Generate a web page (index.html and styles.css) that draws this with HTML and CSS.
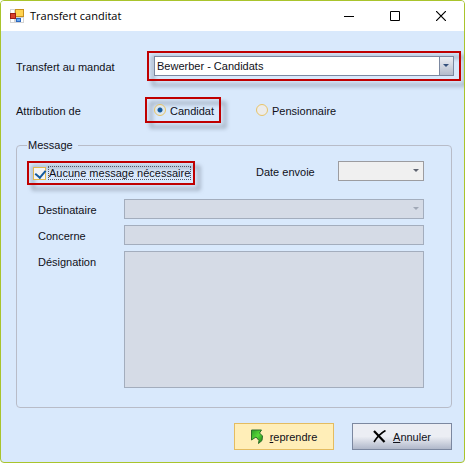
FILE: index.html
```
<!DOCTYPE html>
<html lang="fr">
<head>
    <meta charset="UTF-8">
    <title>Transfert canditat</title>
    <link rel="stylesheet" href="styles.css">
</head>
<body>
<div class="window">
    <div class="titlebar">
        <svg class="app-icon" width="14" height="14" viewBox="0 0 14 14">
            <rect x="0" y="0" width="14" height="14" fill="#d4d4d4"/>
            <path d="M1 1h3v3H1zM1 10h3v3H1zM11 9h2v4h-2z" fill="#fff"/>
            <rect x="5" y="0" width="9" height="8" fill="#c8901c"/>
            <rect x="6" y="1" width="7" height="6" fill="#ffd250"/>
            <rect x="0" y="4" width="6" height="6" fill="#9c1c14"/>
            <rect x="1" y="5" width="4" height="4" fill="#d8402c"/>
            <rect x="6" y="9" width="5" height="4" fill="#2c68c0"/>
            <rect x="7" y="10" width="3" height="2" fill="#68a8f0"/>
        </svg>
        <h1>Transfert canditat</h1>
        <button type="button" class="win-btn" aria-label="Réduire">
            <svg width="10" height="10" viewBox="0 0 10 10"><path d="M0 5.5h10" stroke="#000"/></svg>
        </button>
        <button type="button" class="win-btn" aria-label="Agrandir">
            <svg width="10" height="10" viewBox="0 0 10 10"><path d="M.5.5h9v9h-9z" fill="none" stroke="#000"/></svg>
        </button>
        <button type="button" class="win-btn" aria-label="Fermer">
            <svg width="10" height="10" viewBox="0 0 10 10"><path d="M0 0l10 10M10 0L0 10" stroke="#000" stroke-width="1.2"/></svg>
        </button>
    </div>
    <form class="content">
        <div class="row">
            <label class="row-label wide" for="mandat">Transfert au mandat</label>
            <div class="mark mark-mandat">
                <div class="combo combo-main">
                    <select id="mandat">
                        <option>Bewerber - Candidats</option>
                    </select>
                </div>
            </div>
        </div>
        <div class="row row-type" role="radiogroup" aria-labelledby="attribution">
            <span class="row-label" id="attribution">Attribution de</span>
            <div class="mark mark-type">
                <input type="radio" name="type" id="candidat" checked>
                <label for="candidat">Candidat</label>
            </div>
            <div class="choice">
                <input type="radio" name="type" id="pensionnaire">
                <label for="pensionnaire">Pensionnaire</label>
            </div>
        </div>
        <fieldset>
            <legend>Message</legend>
            <div class="options">
                <div class="mark mark-check">
                    <input type="checkbox" id="aucune" checked>
                    <label class="focused" for="aucune">Aucune message nécessaire</label>
                </div>
                <label class="date-label" for="date">Date envoie</label>
                <div class="combo combo-date">
                    <select id="date"><option></option></select>
                </div>
            </div>
            <div class="fields">
                <label for="destinataire">Destinataire</label>
                <div class="combo combo-off">
                    <select id="destinataire" disabled><option></option></select>
                </div>
                <label for="concerne">Concerne</label>
                <input type="text" id="concerne" disabled>
                <label for="designation">Désignation</label>
                <textarea id="designation" disabled></textarea>
            </div>
        </fieldset>
        <div class="buttons">
            <button type="button" class="btn btn-ok">
                <svg width="12" height="16" viewBox="0 0 12 16">
                    <defs>
                        <linearGradient id="green" x1="0" y1="0" x2="1" y2="1">
                            <stop offset="0" stop-color="#2c9c28"/>
                            <stop offset=".5" stop-color="#58d838"/>
                            <stop offset="1" stop-color="#187818"/>
                        </linearGradient>
                    </defs>
                    <path d="M.5 1L10.500 1 8.500 4 11.500 7 11 11.500 7.500 14.500 8 11.500 5 8 .5 11z" fill="url(#green)" stroke="#2c6c2c"/>
                </svg>
                <span><u>r</u>eprendre</span>
            </button>
            <button type="button" class="btn btn-cancel">
                <svg width="13" height="13" viewBox="0 0 13 13">
                    <path d="M1 1l10.500 11" stroke="#000" stroke-width="2.200"/>
                    <path d="M12.500.5C8 3 4 7 1 12" fill="none" stroke="#000" stroke-width="1.600"/>
                </svg>
                <span><u>A</u>nnuler</span>
            </button>
        </div>
    </form>
</div>
</body>
</html>
```
FILE: styles.css
```
*{
    box-sizing:border-box;
    margin:0;
    padding:0;
}
body{
    background:#fff;
    color:#101018;
    font:11px/14px "Liberation Sans",Arial,sans-serif;
}
input,select,textarea,button{
    font:inherit;
    color:inherit;
}
.window{
    min-height:100vh;
    border:1px solid #a9c42c;
    border-radius:4px;
    background:#d9e9fc;
    overflow:hidden;
}

/* title bar */
.titlebar{
    display:flex;
    align-items:center;
    height:30px;
    padding-left:9px;
    background:#fff;
}
.titlebar h1{
    flex:1;
    padding-left:6px;
    font:11px/16px "Open Sans",sans-serif;
    color:#000;
}
.win-btn{
    display:flex;
    align-items:center;
    justify-content:center;
    width:46px;
    height:28px;
    border:0;
    background:none;
}

.content{
    padding-top:20px;
}
.row{
    display:flex;
    align-items:center;
    margin-bottom:16px;
    padding:0 3px 0 15px;
}
.row-type{
    margin-bottom:15px;
}
.row-label{
    width:129px;
    padding-top:2px;
}
.row-label.wide{
    width:131px;
}

/* red frames with a shadow under the stroke */
.mark{
    position:relative;
    z-index:0;
    display:flex;
    align-items:center;
    border:2px solid #c00000;
}
.mark::before{
    content:"";
    position:absolute;
    z-index:-1;
    inset:-2px;
    border:2px solid #c00000;
    filter:drop-shadow(5px 5px 2px rgba(80,90,105,.6));
}
.mark-mandat{
    flex:1;
    height:30px;
    padding:0 5px;
}
.mark-type{
    width:76px;
    height:26px;
    padding-left:7px;
}
.mark-type label,
.choice label{
    padding-top:2px;
}
.mark-check{
    width:168px;
    height:24px;
    padding-left:4px;
}
.choice{
    display:flex;
    align-items:center;
    margin-left:35px;
}

/* combo boxes */
.combo{
    position:relative;
    height:20px;
}
.combo select{
    appearance:none;
    display:block;
    width:100%;
    height:100%;
    padding-left:2px;
    border:1px solid #7c88a0;
    border-radius:0;
    background:#fff;
    opacity:1;
}
.combo::after{
    content:"";
    position:absolute;
    top:8px;
    right:5px;
    border:3px solid transparent;
    border-top-color:#5f6470;
    border-bottom:0;
    pointer-events:none;
}
.combo-main{
    flex:1;
}
.combo-main::before{
    content:"";
    position:absolute;
    top:1px;
    right:1px;
    bottom:1px;
    width:13px;
    border-left:1px solid #7c88a0;
    background:linear-gradient(#eceef4,#b4bccc);
    pointer-events:none;
}
.combo-main::after{
    border-top-color:#34507c;
}
.combo-date{
    width:86px;
}
.combo-date select{
    border-color:#9c9ca0;
    background:#f0f0f0;
}
.combo-off::after{
    border-top-color:#a0a8b6;
}
.combo-off select,
.fields input,
.fields textarea{
    width:100%;
    border:1px solid #a3adbd;
    background:#d5dbe6;
}

/* radio and tick box */
input[type="radio"]{
    appearance:none;
    width:12px;
    height:12px;
    margin-right:4px;
    border:1px solid #e8c468;
    border-radius:50%;
    background:#ececec;
}
input[type="radio"]:checked{
    background:radial-gradient(circle,#145a9c 2px,#dce8f2 3px);
}
input[type="checkbox"]{
    appearance:none;
    flex:none;
    width:13px;
    height:13px;
    margin-right:2px;
    border:1px solid #e0b850;
    background:#f4f4f4;
}
input[type="checkbox"]:checked::before{
    content:"";
    display:block;
    width:5px;
    height:8px;
    margin:0 0 0 3px;
    border:solid #145a9c;
    border-width:0 2px 2px 0;
    transform:rotate(40deg);
}
.focused{
    padding:0 1px;
    outline:1px dotted #505868;
    outline-offset:-1px;
    white-space:nowrap;
}

fieldset{
    margin:0 12px 0 15px;
    padding:9px 27px 19px 10px;
    border:1px solid #b8bcc8;
    border-radius:4px;
}
legend{
    padding:0 5px 0 1px;
}
.options{
    display:flex;
    align-items:flex-start;
    margin-bottom:14px;
}
.date-label{
    width:82px;
    margin-left:auto;
    padding-top:4px;
}
.fields{
    display:grid;
    grid-template-columns:86px 1fr;
    gap:6px 0;
    padding-left:11px;
}
.fields label{
    padding-top:4px;
}
.fields input{
    height:20px;
    padding:0 3px;
}
.fields textarea{
    display:block;
    height:137px;
    padding:2px 3px;
    resize:none;
}

.buttons{
    display:flex;
    justify-content:flex-end;
    gap:18px;
    padding:15px 12px 12px;
}
.btn{
    display:flex;
    align-items:center;
    justify-content:center;
    gap:7px;
    width:100px;
    height:27px;
}
.btn-ok{
    border:1px solid #e4bc60;
    background:#ffeeb8;
}
.btn-cancel{
    border:1px solid #7c88a0;
    background:linear-gradient(#eceef4 50%,#b0b8ca);
}
```
